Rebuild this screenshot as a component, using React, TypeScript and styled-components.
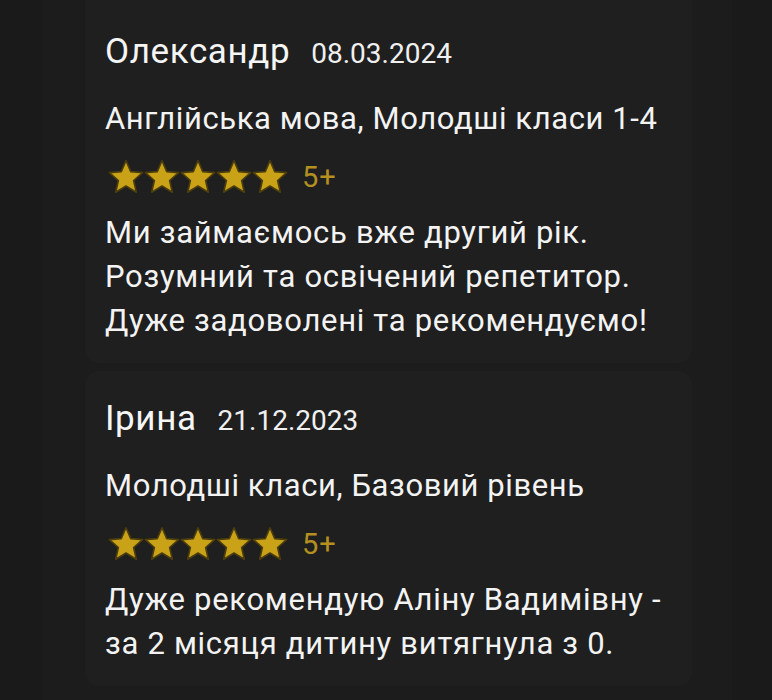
import React from "react";
import styled, { createGlobalStyle } from "styled-components";

const Global = createGlobalStyle`
  html, body { margin: 0; padding: 0; background: #1a1a1a; }
  body { font-family: Roboto, "Noto Sans", Arial, sans-serif; }
`;

const Page = styled.div`
  width: 772px;
  height: 700px;
  overflow: hidden;
  background: #1a1a1a;
  display: flex;
`;

const Column = styled.div`
  margin-left: 42px;
  width: 690px;
  height: 700px;
  background: #1c1c1c;
  display: flex;
  flex-direction: column;
  padding: 0 40px 0 43px;
  box-sizing: border-box;
  gap: 8px;
`;

const Card = styled.div<{ $first?: boolean }>`
  background: #1f1f1f;
  border-radius: ${(p) => (p.$first ? "0 0 14px 14px" : "14px")};
  padding: ${(p) => (p.$first ? "32px" : "28px")} 20px 20px 20px;
  display: flex;
  flex-direction: column;
  color: #f3f3f3;
`;

const Header = styled.div`
  display: flex;
  align-items: baseline;
  gap: 21px;
`;

const Name = styled.span`
  font-size: 35px;
  line-height: 40px;
  letter-spacing: 0.6px;
  color: #f5f5f5;
`;

const DateText = styled.span`
  font-size: 28px;
  color: #f0f0f0;
`;

const Subject = styled.div`
  margin-top: 25px;
  font-size: 31px;
  line-height: 44px;
  letter-spacing: 0.6px;
`;

const Rating = styled.div`
  margin-top: 19px;
  display: flex;
  align-items: center;
  gap: 14px;
  padding-left: 3px;
`;

const Stars = styled.div`
  display: flex;
`;

const Grade = styled.span`
  font-size: 29px;
  line-height: 34px;
  letter-spacing: 1px;
  color: #b39020;
`;

const Body = styled.div`
  margin-top: 17px;
  font-size: 31px;
  line-height: 44px;
  letter-spacing: 0.7px;
`;

const Star = () => (
  <svg width="36" height="34" viewBox="0 0 36 34">
    <path
      d="M18 0.8 L22.7 11.6 L34.6 12.6 L25.6 20.5 L28.3 32.2 L18 26 L7.7 32.2 L10.4 20.5 L1.4 12.6 L13.3 11.6 Z"
      fill="#c9a217"
      stroke="#4d3f0c"
      strokeWidth="1.6"
      strokeLinejoin="round"
    />
  </svg>
);

type Review = {
  name: string;
  date: string;
  subject: string;
  lines: string[];
};

const reviews: Review[] = [
  {
    name: "Олександр",
    date: "08.03.2024",
    subject: "Англійська мова, Молодші класи 1-4",
    lines: [
      "Ми займаємось вже другий рік.",
      "Розумний та освічений репетитор.",
      "Дуже задоволені та рекомендуємо!",
    ],
  },
  {
    name: "Ірина",
    date: "21.12.2023",
    subject: "Молодші класи, Базовий рівень",
    lines: ["Дуже рекомендую Аліну Вадимівну -", "за 2 місяця дитину витягнула з 0."],
  },
];

export default function App() {
  return (
    <>
      <Global />
      <Page>
        <Column>
          {reviews.map((r, i) => (
            <Card key={i} $first={i === 0}>
              <Header>
                <Name>{r.name}</Name>
                <DateText>{r.date}</DateText>
              </Header>
              <Subject>{r.subject}</Subject>
              <Rating>
                <Stars>
                  {[0, 1, 2, 3, 4].map((s) => (
                    <Star key={s} />
                  ))}
                </Stars>
                <Grade>5+</Grade>
              </Rating>
              <Body>
                {r.lines.map((l, j) => (
                  <div key={j}>{l}</div>
                ))}
              </Body>
            </Card>
          ))}
        </Column>
      </Page>
    </>
  );
}
